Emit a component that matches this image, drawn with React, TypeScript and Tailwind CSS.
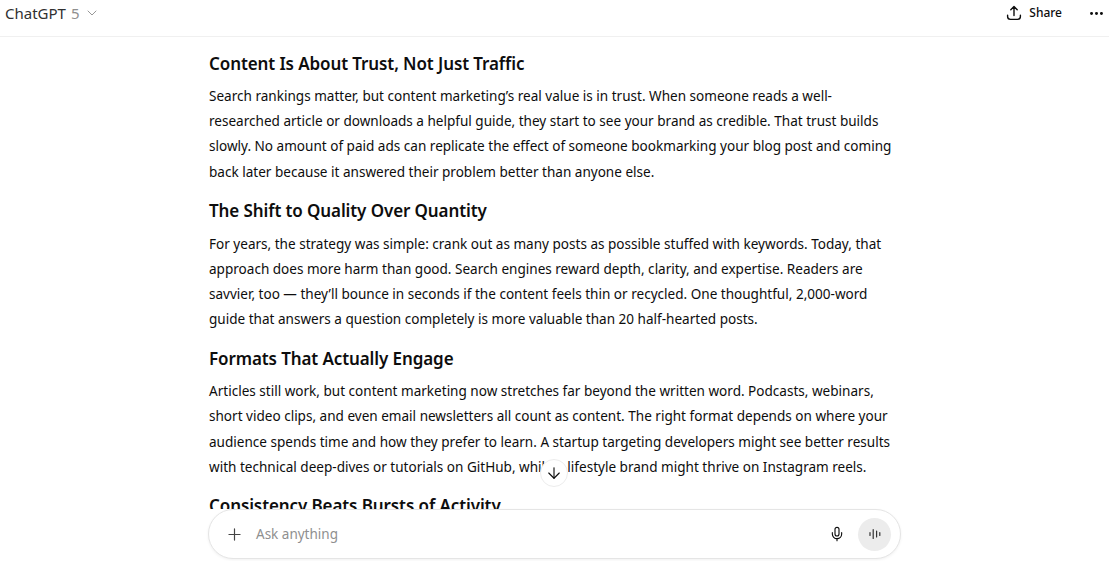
import { Plus, Mic, ArrowDown, ChevronDown, Ellipsis } from 'lucide-react';

const sections = [
  {
    title: 'Content Is About Trust, Not Just Traffic',
    lines: [
      'Search rankings matter, but content marketing’s real value is in trust. When someone reads a well-',
      'researched article or downloads a helpful guide, they start to see your brand as credible. That trust builds',
      'slowly. No amount of paid ads can replicate the effect of someone bookmarking your blog post and coming',
      'back later because it answered their problem better than anyone else.',
    ],
  },
  {
    title: 'The Shift to Quality Over Quantity',
    lines: [
      'For years, the strategy was simple: crank out as many posts as possible stuffed with keywords. Today, that',
      'approach does more harm than good. Search engines reward depth, clarity, and expertise. Readers are',
      'savvier, too — they’ll bounce in seconds if the content feels thin or recycled. One thoughtful, 2,000-word',
      'guide that answers a question completely is more valuable than 20 half-hearted posts.',
    ],
  },
  {
    title: 'Formats That Actually Engage',
    lines: [
      'Articles still work, but content marketing now stretches far beyond the written word. Podcasts, webinars,',
      'short video clips, and even email newsletters all count as content. The right format depends on where your',
      'audience spends time and how they prefer to learn. A startup targeting developers might see better results',
      'with technical deep-dives or tutorials on GitHub, while a lifestyle brand might thrive on Instagram reels.',
    ],
  },
  {
    title: 'Consistency Beats Bursts of Activity',
    lines: [],
  },
];

export default function App() {
  return (
    <div className="flex h-screen flex-col overflow-hidden bg-white font-['Noto_Sans',sans-serif] text-[#0d0d0d]">
      <header className="flex h-[37px] shrink-0 items-start justify-between border-b border-[#f0f0f0] pr-[5px] pl-[5px]">
        <div className="flex items-center pt-[1px] text-[15px] leading-6 text-[#303030]">
          <span>ChatGPT</span>
          <span className="ml-[5px] text-[#8f8f8f]">5</span>
          <ChevronDown className="ml-[4px] h-[16px] w-[16px] text-[#8f8f8f]" strokeWidth={1.4} />
        </div>
        <div className="flex items-center pt-[1px]">
          <svg width="16" height="16" viewBox="0 0 16 16" fill="none" stroke="#0d0d0d" strokeWidth="1.4" strokeLinecap="round" strokeLinejoin="round">
            <path d="M8 10.5V1.8M4.8 4.8 8 1.6l3.2 3.2M1.6 10.2v1.4a2.8 2.8 0 0 0 2.8 2.8h7.2a2.8 2.8 0 0 0 2.8-2.8v-1.4" />
          </svg>
          <span className="ml-[7px] text-[12px] leading-6 font-medium">Share</span>
          <Ellipsis className="mr-[-1px] ml-[26px] h-[17px] w-[17px]" strokeWidth={2.2} />
        </div>
      </header>

      <main className="relative min-h-0 flex-1 overflow-hidden">
        <div className="ml-[209px] w-[700px] pt-[12.7px]">
          {sections.map((s) => (
            <section key={s.title} className="mb-[12.4px]">
              <h3 className="mb-[6.4px] text-[17px] leading-[28px] font-semibold tracking-[-0.1px] whitespace-nowrap">{s.title}</h3>
              {s.lines.map((line) => (
                <p key={line} className="text-[13.55px] leading-[25.2px] whitespace-nowrap">
                  {line}
                </p>
              ))}
            </section>
          ))}
        </div>
        <button className="absolute bottom-[22px] left-[540px] flex h-[28px] w-[28px] items-center justify-center rounded-full border border-[#ececec] bg-white">
          <ArrowDown className="h-[18px] w-[18px]" strokeWidth={1.5} />
        </button>
      </main>

      <footer className="flex h-[52px] shrink-0 pl-[208px]">
        <div className="flex h-[50px] w-[693px] items-center rounded-[25px] border border-[#e5e5e5] bg-white pr-[9px] pl-[16px] shadow-[0_1px_3px_rgba(0,0,0,0.06)]">
          <Plus className="h-[19px] w-[19px] text-[#444]" strokeWidth={1.5} />
          <span className="ml-[12px] flex-1 text-[13.5px] text-[#8f8f8f]">Ask anything</span>
          <Mic className="mr-[13px] h-[16px] w-[16px]" strokeWidth={1.7} />
          <div className="flex h-[33px] w-[33px] items-center justify-center rounded-full bg-[#ececec]">
            <svg width="16" height="16" viewBox="0 0 16 16" fill="none" stroke="#333" strokeWidth="1.2" strokeLinecap="round">
              <path d="M3 6.5v3M6.2 3.5v9M9.6 5v6M12.8 6.5v3" />
            </svg>
          </div>
        </div>
      </footer>
    </div>
  );
}
